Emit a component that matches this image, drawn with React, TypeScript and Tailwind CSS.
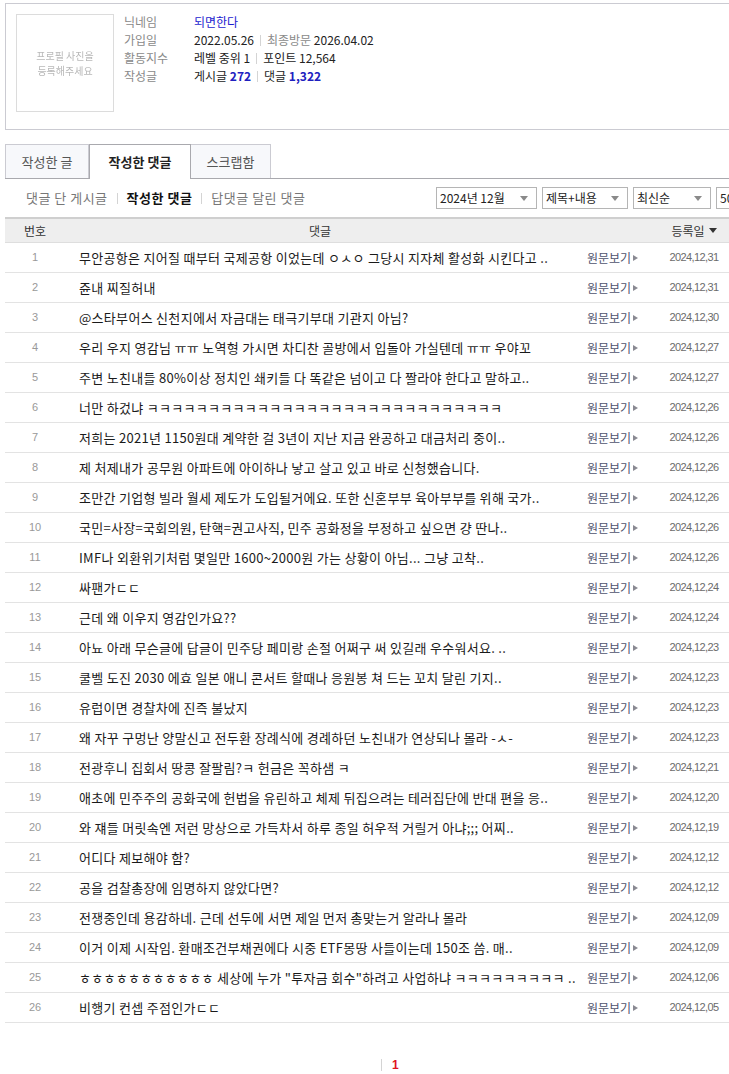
import React from "react";

const rows: [string, string][] = [
  ["무안공항은 지어질 때부터 국제공항 이었는데 ㅇㅅㅇ 그당시 지자체 활성화 시킨다고 ..", "2024,12,31"],
  ["쥰내 찌질허내", "2024,12,31"],
  ["@스타부어스 신천지에서 자금대는 태극기부대 기관지 아님?", "2024,12,30"],
  ["우리 우지 영감님 ㅠㅠ 노역형 가시면 차디찬 골방에서 입돌아 가실텐데 ㅠㅠ 우야꼬", "2024,12,27"],
  ["주변 노친내들 80%이상 정치인 쇄키들 다 똑같은 넘이고 다 짤라야 한다고 말하고..", "2024,12,27"],
  ["너만 하겄냐 ㅋㅋㅋㅋㅋㅋㅋㅋㅋㅋㅋㅋㅋㅋㅋㅋㅋㅋㅋㅋㅋㅋㅋㅋㅋㅋㅋㅋㅋ", "2024,12,26"],
  ["저희는 2021년 1150원대 계약한 걸 3년이 지난 지금 완공하고 대금처리 중이..", "2024,12,26"],
  ["제 처제내가 공무원 아파트에 아이하나 낳고 살고 있고 바로 신청했습니다.", "2024,12,26"],
  ["조만간 기업형 빌라 월세 제도가 도입될거에요. 또한 신혼부부 육아부부를 위해 국가..", "2024,12,26"],
  ["국민=사장=국회의원, 탄핵=권고사직, 민주 공화정을 부정하고 싶으면 걍 딴나..", "2024,12,26"],
  ["IMF나 외환위기처럼 몇일만 1600~2000원 가는 상황이 아님... 그냥 고착..", "2024,12,26"],
  ["싸팬가ㄷㄷ", "2024,12,24"],
  ["근데 왜 이우지 영감인가요??", "2024,12,24"],
  ["아뇨 아래 무슨글에 답글이 민주당 페미랑 손절 어쩌구 써 있길래 우수워서요. ..", "2024,12,23"],
  ["쿨벨 도진 2030 에효 일본 애니 콘서트 할때나 응원봉 쳐 드는 꼬치 달린 기지..", "2024,12,23"],
  ["유럽이면 경찰차에 진즉 불났지", "2024,12,23"],
  ["왜 자꾸 구멍난 양말신고 전두환 장례식에 경례하던 노친내가 연상되나 몰라 -ㅅ-", "2024,12,23"],
  ["전광후니 집회서 땅콩 잘팔림?ㅋ 헌금은 꼭하샘 ㅋ", "2024,12,21"],
  ["애초에 민주주의 공화국에 헌법을 유린하고 체제 뒤집으려는 테러집단에 반대 편을 응..", "2024,12,20"],
  ["와 쟤들 머릿속엔 저런 망상으로 가득차서 하루 종일 허우적 거릴거 아냐;;; 어찌..", "2024,12,19"],
  ["어디다 제보해야 함?", "2024,12,12"],
  ["공을 검찰총장에 임명하지 않았다면?", "2024,12,12"],
  ["전쟁중인데 용감하네. 근데 선두에 서면 제일 먼저 총맞는거 알라나 몰라", "2024,12,09"],
  ["이거 이제 시작임. 환매조건부채권에다 시중 ETF몽땅 사들이는데 150조 씀. 매..", "2024,12,09"],
  ["ㅎㅎㅎㅎㅎㅎㅎㅎㅎㅎㅎ 세상에 누가 \"투자금 회수\"하려고 사업하냐 ㅋㅋㅋㅋㅋㅋㅋㅋㅋ ..", "2024,12,06"],
  ["비행기 컨셉 주점인가ㄷㄷ", "2024,12,05"],
];

const font = "font-['Noto_Sans_CJK_KR','Noto_Sans',sans-serif]";
const numFont = "font-['Liberation_Sans','Noto_Sans_CJK_KR',sans-serif]";

function Sep() {
  return <span className="mx-[6px] inline-block h-[11px] w-px bg-[#d4d4d4] align-[-1px]" />;
}

function DownArrow({ className = "" }: { className?: string }) {
  return (
    <svg width="8" height="5" viewBox="0 0 8 5" className={className}>
      <path d="M0 0H8L4 5Z" fill="currentColor" />
    </svg>
  );
}

function Select({ label, width }: { label: string; width: string }) {
  return (
    <div
      className={`flex h-[22px] shrink-0 items-center justify-between border border-[#b5b5b5] bg-white pl-[3px] pr-[8px] text-[12px] text-[#222] ${width}`}
    >
      <span className="whitespace-nowrap">{label}</span>
      <DownArrow className="text-[#8a8a8a]" />
    </div>
  );
}

export default function App() {
  return (
    <div className={`w-full overflow-hidden bg-white ${font}`}>
      <div className="w-[776px] pl-[5px] pt-[3px]">
        {/* profile */}
        <div className="flex h-[127px] border border-[#cbcbd2] p-[10px]">
          <div className="flex h-[98px] w-[98px] shrink-0 items-center justify-center border border-[#dcdcdc] text-center text-[10px] leading-[15px] text-[#b8b8b8] blur-[0.3px]">
            프로필 사진을
            <br />
            등록해주세요
          </div>
          <div className="ml-[10px] -mt-[1px] flex flex-col text-[12px] leading-[18px]">
            <div className="flex">
              <span className="w-[70px] text-[#8a8a8a]">닉네임</span>
              <span className="text-[#1c1ccf]">되면한다</span>
            </div>
            <div className="flex">
              <span className="w-[70px] text-[#8a8a8a]">가입일</span>
              <span className="text-[#222]">
                2022.05.26<Sep />
                <span className="text-[#8a8a8a]">최종방문</span> 2026.04.02
              </span>
            </div>
            <div className="flex">
              <span className="w-[70px] text-[#8a8a8a]">활동지수</span>
              <span className="text-[#222]">
                레벨 중위 1<Sep />
                포인트 12,564
              </span>
            </div>
            <div className="flex">
              <span className="w-[70px] text-[#8a8a8a]">작성글</span>
              <span className="text-[#222]">
                게시글 <b className="text-[#2020bf]">272</b>
                <Sep />
                댓글 <b className="text-[#2020bf]">1,322</b>
              </span>
            </div>
          </div>
        </div>

        {/* tabs */}
        <div className="mt-[14px] flex h-[35px] border-b border-[#a9a9ae] text-[13px]">
          <div className="flex w-[84px] items-center justify-center border border-b-0 border-[#cbcbd2] bg-[#f7f8fb] text-[#555]">
            작성한 글
          </div>
          <div className="relative -mb-px flex w-[102px] items-center justify-center border border-b-0 border-[#a9a9ae] bg-white font-bold text-[#222]">
            작성한 댓글
          </div>
          <div className="flex w-[80px] items-center justify-center border border-b-0 border-l-0 border-[#cbcbd2] bg-[#f7f8fb] text-[#555]">
            스크랩함
          </div>
        </div>

        {/* filter row */}
        <div className="flex h-[38px] items-center">
          <div className="flex shrink-0 items-center whitespace-nowrap pl-[21px] text-[13px] tracking-[0.5px] text-[#777]">
            <span>댓글 단 게시글</span>
            <span className="mx-[9px] inline-block h-[11px] w-px bg-[#d4d4d4]" />
            <span className="font-bold text-[#111]">작성한 댓글</span>
            <span className="mx-[9px] inline-block h-[11px] w-px bg-[#d4d4d4]" />
            <span>답댓글 달린 댓글</span>
          </div>
          <div className="ml-auto flex shrink-0 gap-[5px]">
            <Select label="2024년 12월" width="w-[101px]" />
            <Select label="제목+내용" width="w-[86px]" />
            <Select label="최신순" width="w-[78px]" />
            <Select label="50개씩" width="w-[60px]" />
          </div>
        </div>

        {/* table */}
        <div className="w-[760px]">
          <div className="flex h-[26px] items-center border-t-2 border-b border-t-[#cfcfcf] border-b-[#dedede] bg-[#eeeeee] text-[12px] text-[#333]">
            <div className="w-[60px] text-center">번호</div>
            <div className="w-[510px] text-center">댓글</div>
            <div className="w-[80px]" />
            <div className="flex w-[78px] items-center justify-center gap-[4px]">
              등록일 <DownArrow className="text-[#333]" />
            </div>
          </div>
          {rows.map(([title, date], i) => (
            <div
              key={i}
              className="flex h-[30px] items-center border-b border-[#e3e3e3] text-[12px]"
            >
              <div className={`w-[60px] text-center text-[11px] text-[#999] ${numFont}`}>{i + 1}</div>
              <div className="w-[510px] overflow-hidden whitespace-nowrap pl-[14px] text-[13px] tracking-[0.3px] text-[#1a1a1a]">
                {title}
              </div>
              <div className="flex w-[80px] items-center pl-[12px] text-[#50546e]">
                원문보기
                <svg width="5" height="6" viewBox="0 0 5 6" className="ml-[2px] text-[#8a8a93]">
                  <path d="M0 0L5 3L0 6Z" fill="currentColor" />
                </svg>
              </div>
              <div className={`w-[78px] text-center text-[11px] tracking-[-0.6px] text-[#6b6b6b] ${numFont}`}>
                {date}
              </div>
            </div>
          ))}
        </div>

        {/* pagination */}
        <div className="flex h-[84px] items-center pl-[376px]">
          <span className="inline-block h-[12px] w-px bg-[#d4d4d4]" />
          <span className={`ml-[10px] text-[12px] font-bold text-[#e0141e] ${numFont}`}>1</span>
        </div>
      </div>
    </div>
  );
}
